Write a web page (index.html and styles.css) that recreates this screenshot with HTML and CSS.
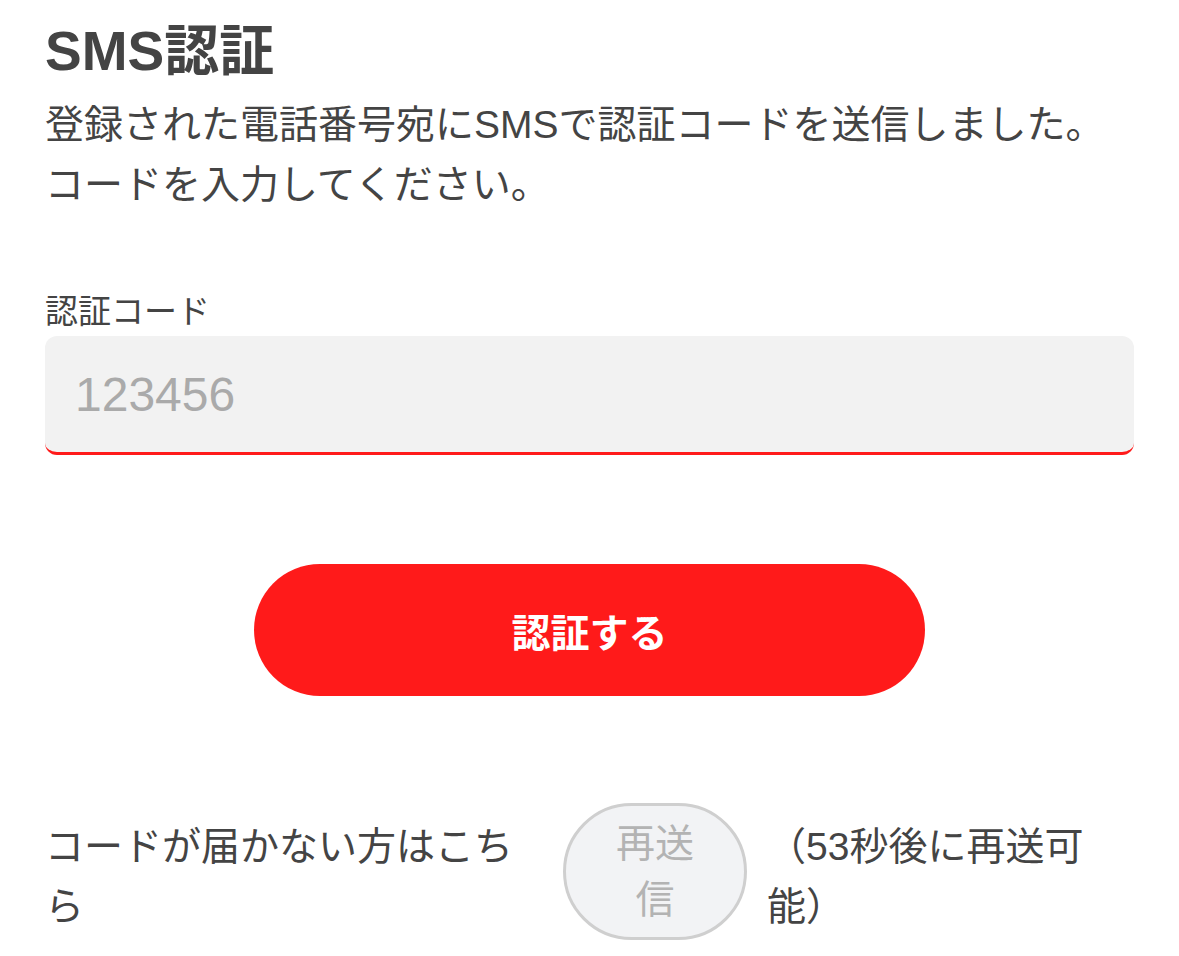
FILE: index.html
```html
<!DOCTYPE html>
<html lang="ja">
<head>
<meta charset="utf-8">
<title>SMS認証</title>
<link rel="stylesheet" href="styles.css">
</head>
<body>
<main class="page">
  <h1 class="title">SMS認証</h1>
  <p class="desc">登録された電話番号宛にSMSで認証コードを送信しました。<br>コードを入力してください。</p>
  <label class="label" for="code">認証コード</label>
  <input class="code-input" id="code" type="text" placeholder="123456">
  <div class="actions">
    <button class="submit" type="button">認証する</button>
  </div>
  <div class="resend-row">
    <p class="resend-note">コードが届かない方はこちら</p>
    <button class="resend" type="button" disabled>再送信</button>
    <p class="resend-timer">（53秒後に再送可能）</p>
  </div>
</main>
</body>
</html>
```
FILE: styles.css
```css
* { box-sizing: border-box; }
html, body { margin: 0; padding: 0; background: #fff; }
body {
  font-family: "Liberation Sans", "Noto Sans CJK JP", sans-serif;
  color: #444;
}
.page {
  padding: 11px 45px 0 45px;
  display: flex;
  flex-direction: column;
}
.title {
  margin: 0;
  font-size: 55px;
  line-height: 80px;
  font-weight: 700;
  color: #444;
}
.desc {
  margin: 4px 0 0 0;
  font-size: 39px;
  line-height: 60px;
  color: #444;
}
.label {
  margin-top: 73px;
  font-size: 33px;
  line-height: 48px;
  color: #444;
}
.code-input {
  margin-top: 0;
  width: 100%;
  height: 119px;
  border: none;
  border-bottom: 3px solid #ff1a1a;
  border-radius: 12px;
  background: #f2f2f2;
  padding: 0 30px;
  font-family: "Liberation Sans", "Noto Sans CJK JP", sans-serif;
  font-size: 48px;
  color: #444;
  outline: none;
}
.code-input::placeholder { color: #aaaaaa; }
.actions {
  margin-top: 109px;
  display: flex;
  justify-content: center;
}
.submit {
  width: 671px;
  height: 132px;
  border: none;
  border-radius: 9999px;
  background: #ff1a1a;
  color: #fff;
  font-family: "Liberation Sans", "Noto Sans CJK JP", sans-serif;
  font-size: 39px;
  font-weight: 700;
}
.resend-row {
  margin-top: 107px;
  display: flex;
  align-items: center;
}
.resend-note {
  margin: 0;
  padding-top: 10px;
  width: 490px;
  font-size: 39px;
  line-height: 60px;
  color: #444;
}
.resend {
  margin-left: 28px;
  width: 184px;
  height: 137px;
  flex-shrink: 0;
  padding: 0 45px;
  border: 3px solid #cfcfcf;
  border-radius: 9999px;
  background: #f2f3f5;
  color: #b3b3b3;
  font-family: "Liberation Sans", "Noto Sans CJK JP", sans-serif;
  font-size: 39px;
  line-height: 56px;
}
.resend-timer {
  margin: 0 0 0 20px;
  padding-top: 10px;
  width: 340px;
  font-size: 39px;
  line-height: 60px;
  color: #444;
}
```
